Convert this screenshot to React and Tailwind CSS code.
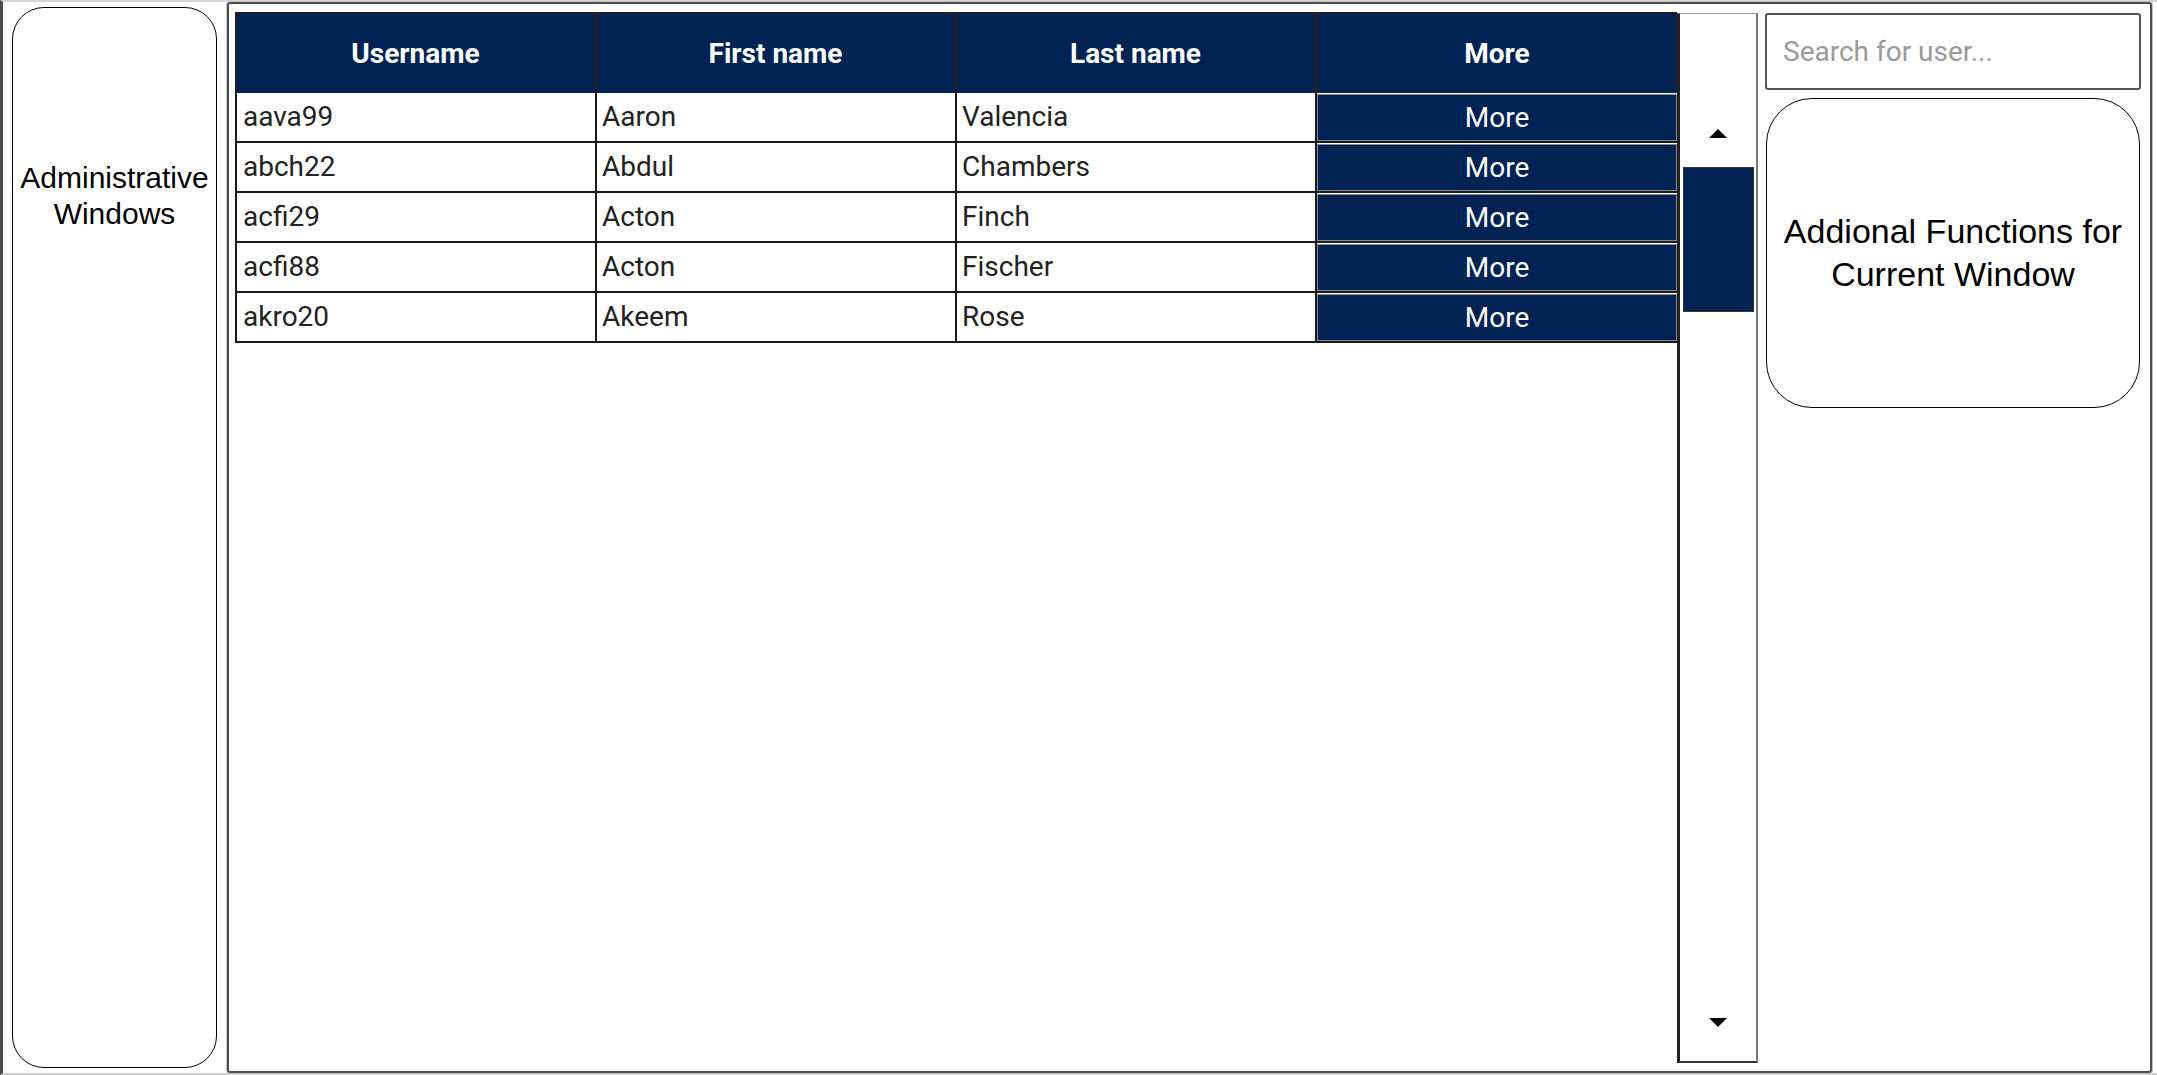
import React, { useState } from 'react';

const users = [
  { username: 'aava99', first: 'Aaron', last: 'Valencia' },
  { username: 'abch22', first: 'Abdul', last: 'Chambers' },
  { username: 'acfi29', first: 'Acton', last: 'Finch' },
  { username: 'acfi88', first: 'Acton', last: 'Fischer' },
  { username: 'akro20', first: 'Akeem', last: 'Rose' },
];

function Arrow({ down }) {
  return (
    <svg width="18" height="9" viewBox="0 0 18 9" className="block mx-auto">
      {down ? <polygon points="0,0 18,0 9,9" fill="#000" /> : <polygon points="9,0 18,9 0,9" fill="#000" />}
    </svg>
  );
}

function App() {
  const [query, setQuery] = useState('');

  const rows = users.filter(u =>
    !query.trim() || u.username.includes(query.trim().toLowerCase()) ||
    (u.first + ' ' + u.last).toLowerCase().includes(query.trim().toLowerCase())
  );

  return (
    <div className="flex h-screen w-full bg-white border-l-[3px] border-l-[#4a4a4a] border-t-2 border-t-[#d4d4d4] border-b-2 border-b-[#cfcfcf]">
      {/* Sidebar */}
      <aside className="ml-[9px] my-[5px] w-[205px] shrink-0 border border-black rounded-[32px] pt-[152px] text-center text-[30px] leading-[36px] text-black font-['Liberation_Sans',Arial,sans-serif]">
        Administrative<br />Windows
      </aside>

      {/* Main window */}
      <main className="ml-[10px] mr-[5px] flex-1 min-w-0 flex border-2 border-[#4d4d4d] rounded-[3px] shadow-[0_0_0_1px_#c4c4c4] pl-[6px] pr-[9px] pt-[8px] pb-[8px] gap-[7px]">
        <div className="flex-1 min-w-0 flex font-['Roboto',sans-serif]">
          {/* Table */}
          <div className="flex-1 min-w-0">
            <div className="grid grid-cols-4 h-[81px] bg-[#002353] border-t-2 border-l-2 border-[#1f1f1f] text-white font-bold text-[28px]">
              <div className="flex items-center justify-center border-r-[3px] border-[#1f1f1f]">Username</div>
              <div className="flex items-center justify-center border-r-[3px] border-[#1f1f1f]">First name</div>
              <div className="flex items-center justify-center border-r-[3px] border-[#1f1f1f]">Last name</div>
              <div className="flex items-center justify-center">More</div>
            </div>
            {rows.map(u => (
              <div key={u.username} className="grid grid-cols-4 h-[50px] border-l-2 border-b-2 border-[#1a1a1a] text-[28px] text-[#222]">
                <div className="flex items-center pl-[6px] border-r-2 border-[#1a1a1a]">{u.username}</div>
                <div className="flex items-center pl-[5px] border-r-2 border-[#1a1a1a]">{u.first}</div>
                <div className="flex items-center pl-[5px] border-r-2 border-[#1a1a1a]">{u.last}</div>
                <button className="flex items-center justify-center bg-[#002353] border border-[#8a8a8a] text-white text-[28px] mt-[1px]">
                  More
                </button>
              </div>
            ))}
          </div>

          {/* Scrollbar */}
          <div className="w-[81px] shrink-0 flex flex-col border-l-[3px] border-l-[#222] border-r-2 border-r-[#7a7a7a] border-b-2 border-b-[#333] border-t border-t-[#9a9a9a] mt-[1px]">
            <div className="h-[115px]" />
            <Arrow />
            <div className="mt-[29px] ml-[3px] mr-[2px] h-[145px] bg-[#002353] border border-[#333]" />
            <div className="flex-1" />
            <Arrow down />
            <div className="h-[34px]" />
          </div>
        </div>

        {/* Right column */}
        <div className="w-[376px] shrink-0 flex flex-col gap-[8px] pt-[1px]">
          <input
            className="h-[77px] w-full border-2 border-[#555] rounded-[3px] pl-[16px] text-[28px] text-[#222] placeholder-[#9a9a9a] outline-none font-['Roboto',sans-serif]"
            placeholder="Search for user..."
            value={query}
            onChange={e => setQuery(e.target.value)}
          />
          <div className="mx-[1px] h-[310px] border border-black rounded-[46px] flex items-center justify-center text-center text-[34px] leading-[43px] text-black font-['Liberation_Sans',Arial,sans-serif]">
            Addional Functions for<br />Current Window
          </div>
        </div>
      </main>
    </div>
  );
}

export default App;
